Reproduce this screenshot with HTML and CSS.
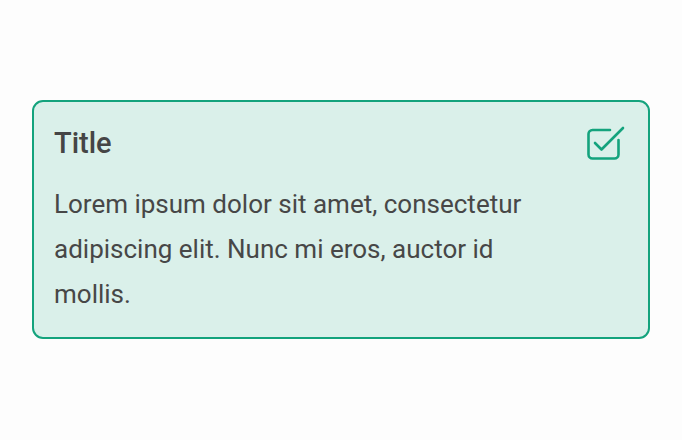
FILE: index.html
```html
<!DOCTYPE html>
<html>
<head>
    <meta charset="utf-8" />
    <title>Card</title>
    <link rel="stylesheet" href="styles.css">
</head>
<body>
    <div class="page">
        <div class="card">
            <div class="card-header">
                <h1 class="card-title">Title</h1>
                <svg class="card-check" width="42" height="40" viewBox="0 0 42 40" fill="none" stroke="#14A37D" stroke-width="2.6" stroke-linecap="round" stroke-linejoin="round">
                    <path d="M34.5 16v14.5a4 4 0 0 1-4 4h-22a4 4 0 0 1-4-4v-20.5a4 4 0 0 1 4-4h17.5" />
                    <path d="M11 19l6.5 6.5L39 4" />
                </svg>
            </div>
            <p class="card-text">Lorem ipsum dolor sit amet, consectetur adipiscing elit. Nunc mi eros, auctor id mollis.</p>
        </div>
    </div>
</body>
</html>
```

FILE: styles.css
```css
body {
    margin: 0;
    padding: 0;
    background-color: #FDFDFD;
    font-family: Roboto, sans-serif;
}

.page {
    padding: 100px 32px;
}

.card {
    box-sizing: border-box;
    width: 618px;
    height: 239px;
    padding: 22px 22px 0 20px;
    background-color: #DAF0EA;
    border: 2px solid #14A37D;
    border-radius: 11px;
}

.card-header {
    display: flex;
    justify-content: space-between;
    align-items: flex-start;
}

.card-title {
    margin: 0;
    font-size: 29px;
    font-weight: 500;
    line-height: 38px;
    color: #454545;
}

.card-text {
    margin: 18px 0 0 0;
    max-width: 480px;
    font-size: 26px;
    line-height: 45px;
    color: #474747;
}
```
